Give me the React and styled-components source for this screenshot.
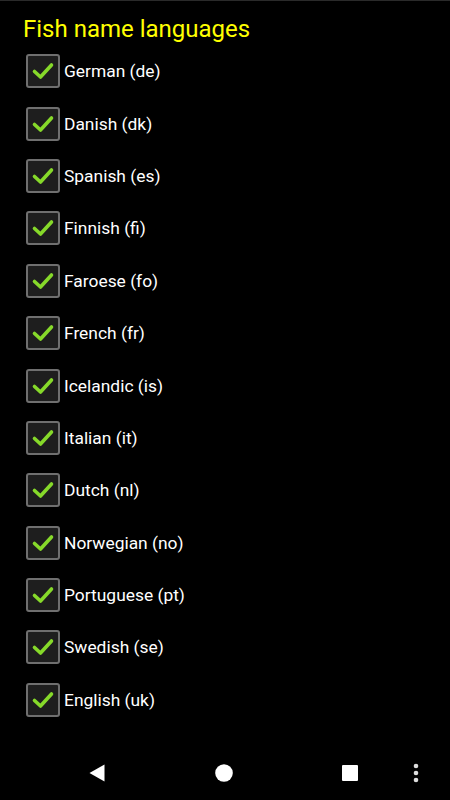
import React from 'react'
import styled, { createGlobalStyle } from 'styled-components'

const languages = [
  'German (de)',
  'Danish (dk)',
  'Spanish (es)',
  'Finnish (fi)',
  'Faroese (fo)',
  'French (fr)',
  'Icelandic (is)',
  'Italian (it)',
  'Dutch (nl)',
  'Norwegian (no)',
  'Portuguese (pt)',
  'Swedish (se)',
  'English (uk)',
]

const GlobalStyle = createGlobalStyle`
  body {
    margin: 0;
    background: #000;
    font-family: Roboto, "Noto Sans", sans-serif;
  }
`

const Screen = styled.div`
  width: 450px;
  height: 800px;
  background: #000;
  border-top: 1px solid #2a2a2a;
  box-sizing: border-box;
  display: flex;
  flex-direction: column;
`

const Content = styled.div`
  flex: 1;
  padding: 14px 0 0 23px;
`

const Title = styled.h1`
  margin: 0 0 2px;
  color: #ffff00;
  font-size: 24px;
  font-weight: 400;
  line-height: 28px;
`

const List = styled.div`
  display: flex;
  flex-direction: column;
`

const Row = styled.label`
  display: flex;
  align-items: center;
  height: 52.4px;
  padding-left: 3px;
`

const Box = styled.span`
  width: 30px;
  height: 30px;
  border: 2px solid #6f6f6f;
  border-radius: 3px;
  background: #1e1e1e;
  display: flex;
  align-items: center;
  justify-content: center;
  margin-right: 4px;
`

const Label = styled.span`
  color: #fff;
  font-size: 17.4px;
`

const NavBar = styled.div`
  height: 54px;
  display: flex;
  align-items: center;
  padding-left: 60px;
`

const NavSlot = styled.div`
  width: ${p => p.w}px;
  display: flex;
  justify-content: center;
`

const Check = () => (
  <svg width="24" height="24" viewBox="0 0 24 24">
    <path d="M3.5 12.5 L9.5 18 L20.5 6" fill="none" stroke="#86d92a" strokeWidth="3.6" strokeLinecap="round" strokeLinejoin="round" />
  </svg>
)

export default function App() {
  return (
    <>
      <GlobalStyle />
      <Screen>
        <Content>
          <Title>Fish name languages</Title>
          <List>
            {languages.map(l => (
              <Row key={l}>
                <Box><Check /></Box>
                <Label>{l}</Label>
              </Row>
            ))}
          </List>
        </Content>
        <NavBar>
          <NavSlot w={74}>
            <svg width="16" height="18" viewBox="0 0 16 18"><path d="M15.5 0.5 L15.5 17.5 L0.5 9 Z" fill="#fff" /></svg>
          </NavSlot>
          <NavSlot w={180}>
            <svg width="18" height="18" viewBox="0 0 18 18"><circle cx="9" cy="9" r="8.8" fill="#fff" /></svg>
          </NavSlot>
          <NavSlot w={72}>
            <svg width="16" height="16" viewBox="0 0 16 16"><rect width="16" height="16" rx="1" fill="#fff" /></svg>
          </NavSlot>
          <NavSlot w={60}>
            <svg width="6" height="20" viewBox="0 0 6 20">
              <circle cx="3" cy="3" r="2.3" fill="#ddd" />
              <circle cx="3" cy="10" r="2.3" fill="#ddd" />
              <circle cx="3" cy="17" r="2.3" fill="#ddd" />
            </svg>
          </NavSlot>
        </NavBar>
      </Screen>
    </>
  )
}
